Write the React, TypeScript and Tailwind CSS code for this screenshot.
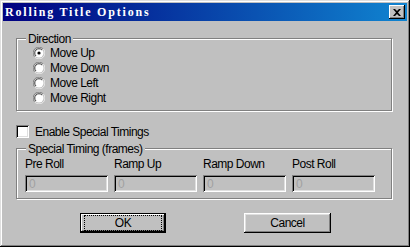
import React from "react";

const ui = "font-['Liberation_Sans',Arial,sans-serif] text-[12px] tracking-[-0.5px] leading-none text-black";

function Radio({ checked, label }: { checked?: boolean; label: string }) {
  return (
    <div className="flex h-[15px] items-center gap-[5px]">
      <svg width="12" height="12" viewBox="0 0 12 12" className="shrink-0">
        <path d="M10.5 2.2 A5.5 5.5 0 0 0 1.5 9.8" fill="none" stroke="#808080" strokeWidth="1" />
        <circle cx="6" cy="6" r="4.5" fill="#fff" />
        <path d="M9 3 A4.2 4.2 0 0 0 3 9" fill="none" stroke="#404040" strokeWidth="1" />
        <path d="M1.8 10.2 A5.5 5.5 0 0 0 10.2 1.8" fill="none" stroke="#e8e8e8" strokeWidth="1" />
        {checked && <circle cx="6" cy="6" r="1.6" fill="#000" />}
      </svg>
      <span>{label}</span>
    </div>
  );
}

function Field({ label }: { label: string }) {
  return (
    <div className="flex w-[83px] flex-col">
      <span className="h-[12px]">{label}</span>
      <div className="mt-[5px] flex h-[17px] items-center bg-[#c0c0c0] pl-[4px] text-[#a0a0a0] shadow-[inset_1px_1px_0_#808080,inset_-1px_-1px_0_#fff,inset_2px_2px_0_#000,inset_-2px_-2px_0_#dfdfdf]">
        0
      </div>
    </div>
  );
}

function GroupBox({
  title,
  className,
  children,
}: {
  title: string;
  className?: string;
  children: React.ReactNode;
}) {
  return (
    <div
      className={`relative border border-[#808080] shadow-[1px_1px_0_#fff,inset_1px_1px_0_#fff] ${className ?? ""}`}
    >
      <span className="absolute left-[9px] top-[-6px] bg-[#c0c0c0] px-[2px]">{title}</span>
      {children}
    </div>
  );
}

export default function App() {
  return (
    <div
      className={`flex h-[247px] w-[410px] flex-col bg-[#c0c0c0] p-[3px] shadow-[inset_-1px_-1px_0_#000,inset_1px_1px_0_#dfdfdf,inset_-2px_-2px_0_#808080,inset_2px_2px_0_#fff] ${ui}`}
    >
      {/* Title bar */}
      <div className="flex h-[18px] items-center justify-between bg-[linear-gradient(90deg,#000080,#1084d0)] pl-[2px] pr-[2px]">
        <span className="font-['Liberation_Serif',serif] text-[12px] font-bold tracking-[1.8px] text-white">
          Rolling Title Options
        </span>
        <div className="flex h-[14px] w-[16px] items-center justify-center bg-[#c0c0c0] shadow-[inset_-1px_-1px_0_#000,inset_1px_1px_0_#fff,inset_-2px_-2px_0_#808080]">
          <svg width="8" height="7" viewBox="0 0 8 7">
            <path d="M0 0h2l2 2 2-2h2L5 3.5 8 7H6L4 5 2 7H0l3-3.5z" fill="#000" />
          </svg>
        </div>
      </div>

      {/* Body */}
      <div className="flex flex-col px-[13px]">
        <GroupBox title="Direction" className="mt-[17px] h-[73px] w-[376px] pl-[16px] pt-[6px]">
          <Radio checked label="Move Up" />
          <Radio label="Move Down" />
          <Radio label="Move Left" />
          <Radio label="Move Right" />
        </GroupBox>

        <div className="mt-[14px] flex items-center gap-[6px]">
          <div className="h-[13px] w-[13px] bg-white shadow-[inset_1px_1px_0_#808080,inset_-1px_-1px_0_#fff,inset_2px_2px_0_#000,inset_-2px_-2px_0_#dfdfdf]" />
          <span>Enable Special Timings</span>
        </div>

        <GroupBox
          title="Special Timing (frames)"
          className="mt-[10px] flex h-[51px] w-[376px] gap-[6px] pl-[8px] pt-[9px]"
        >
          <Field label="Pre Roll" />
          <Field label="Ramp Up" />
          <Field label="Ramp Down" />
          <Field label="Post Roll" />
        </GroupBox>

        <div className="mt-[14px] flex">
          <button className="ml-[64px] flex h-[20px] w-[86px] items-center justify-center border border-black bg-[#c0c0c0] shadow-[inset_-1px_-1px_0_#000,inset_1px_1px_0_#fff,inset_-2px_-2px_0_#808080]">
            <span className="flex h-[14px] w-[76px] items-center justify-center outline-1 outline-dotted outline-black">
              OK
            </span>
          </button>
          <button className="ml-[78px] flex h-[20px] w-[87px] items-center justify-center bg-[#c0c0c0] shadow-[inset_-1px_-1px_0_#000,inset_1px_1px_0_#fff,inset_-2px_-2px_0_#808080,inset_2px_2px_0_#dfdfdf]">
            Cancel
          </button>
        </div>
      </div>
    </div>
  );
}
